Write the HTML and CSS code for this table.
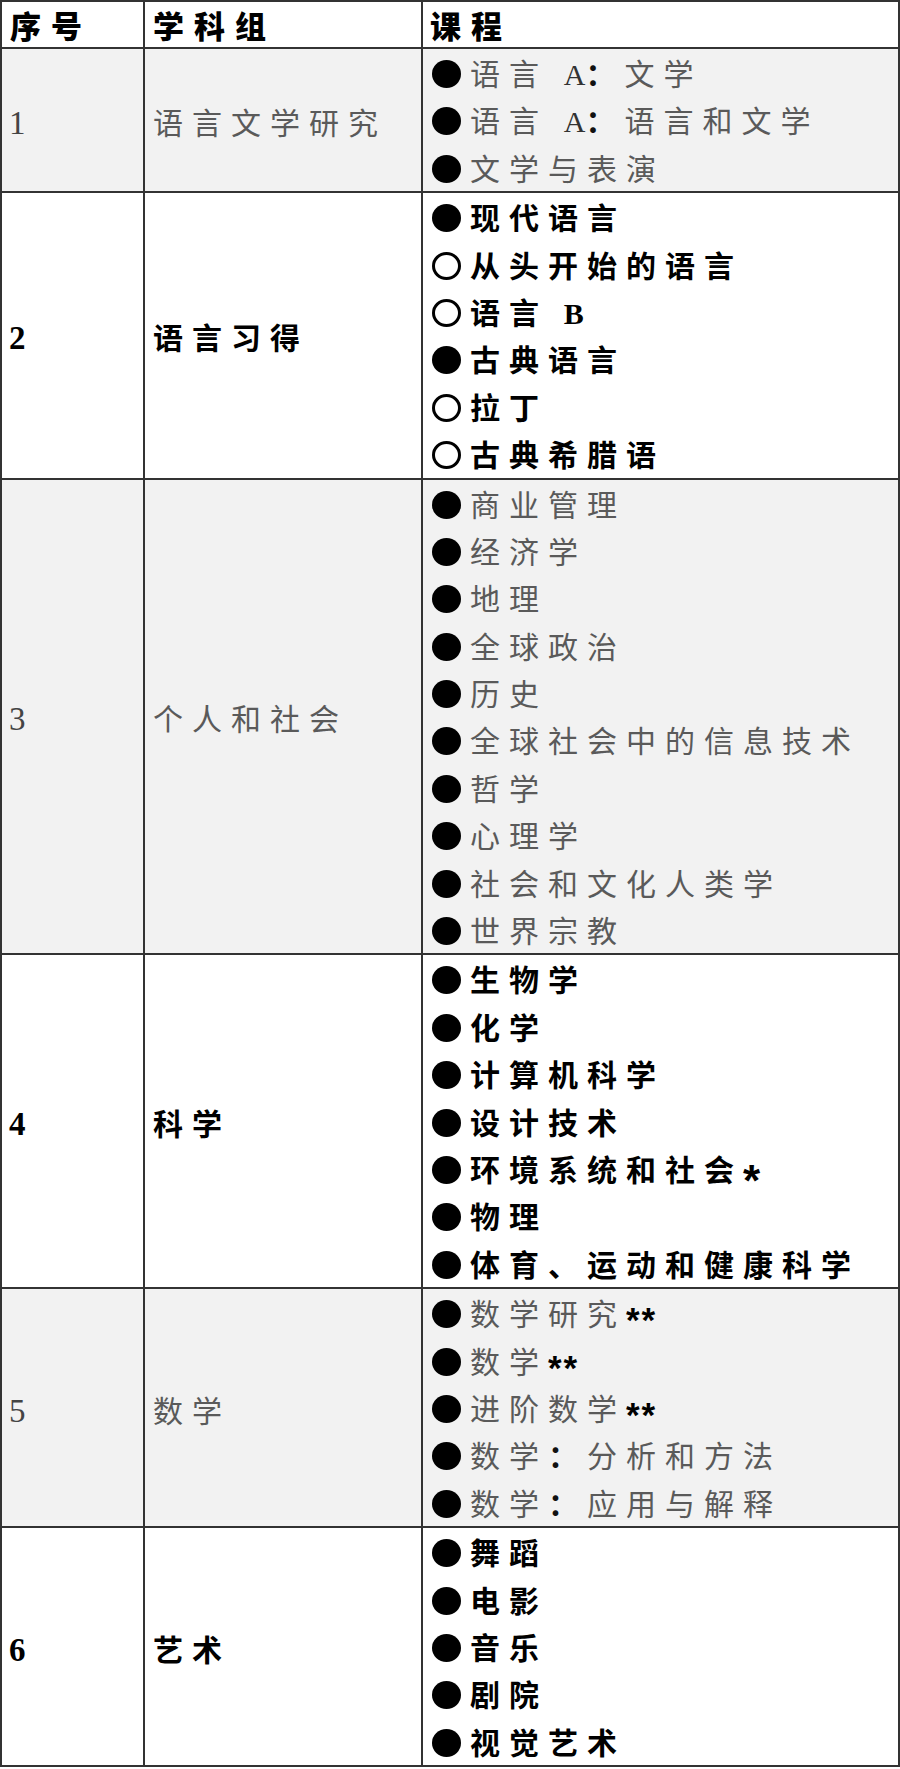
FILE: index.html
```html
<!DOCTYPE html>
<html lang="zh-CN">
<head>
<meta charset="utf-8">
<title>学科组与课程</title>
<link rel="stylesheet" href="styles.css">
</head>
<body>
<div class="tbl">
  <div class="cell head c1">序号</div>
  <div class="cell head c2">学科组</div>
  <div class="cell head c3">课程</div>

  <div class="cell num alt">1</div>
  <div class="cell grp alt">语言文学研究</div>
  <div class="cell alt">
    <ul class="list">
      <li><span class="dot"></span><span class="t">语言 <span class="lat">A</span><span class="p">：</span>文学</span></li>
      <li><span class="dot"></span><span class="t">语言 <span class="lat">A</span><span class="p">：</span>语言和文学</span></li>
      <li><span class="dot"></span><span class="t">文学与表演</span></li>
    </ul>
  </div>

  <div class="cell num strong">2</div>
  <div class="cell grp strong">语言习得</div>
  <div class="cell strong">
    <ul class="list">
      <li><span class="dot"></span><span class="t">现代语言</span></li>
      <li><span class="dot ring"></span><span class="t">从头开始的语言</span></li>
      <li><span class="dot ring"></span><span class="t">语言 <span class="lat">B</span></span></li>
      <li><span class="dot"></span><span class="t">古典语言</span></li>
      <li><span class="dot ring"></span><span class="t">拉丁</span></li>
      <li><span class="dot ring"></span><span class="t">古典希腊语</span></li>
    </ul>
  </div>

  <div class="cell num alt">3</div>
  <div class="cell grp alt">个人和社会</div>
  <div class="cell alt">
    <ul class="list">
      <li><span class="dot"></span><span class="t">商业管理</span></li>
      <li><span class="dot"></span><span class="t">经济学</span></li>
      <li><span class="dot"></span><span class="t">地理</span></li>
      <li><span class="dot"></span><span class="t">全球政治</span></li>
      <li><span class="dot"></span><span class="t">历史</span></li>
      <li><span class="dot"></span><span class="t">全球社会中的信息技术</span></li>
      <li><span class="dot"></span><span class="t">哲学</span></li>
      <li><span class="dot"></span><span class="t">心理学</span></li>
      <li><span class="dot"></span><span class="t">社会和文化人类学</span></li>
      <li><span class="dot"></span><span class="t">世界宗教</span></li>
    </ul>
  </div>

  <div class="cell num strong">4</div>
  <div class="cell grp strong">科学</div>
  <div class="cell strong">
    <ul class="list">
      <li><span class="dot"></span><span class="t">生物学</span></li>
      <li><span class="dot"></span><span class="t">化学</span></li>
      <li><span class="dot"></span><span class="t">计算机科学</span></li>
      <li><span class="dot"></span><span class="t">设计技术</span></li>
      <li><span class="dot"></span><span class="t">环境系统和社会<span class="ast big">*</span></span></li>
      <li><span class="dot"></span><span class="t">物理</span></li>
      <li><span class="dot"></span><span class="t">体育、运动和健康科学</span></li>
    </ul>
  </div>

  <div class="cell num alt">5</div>
  <div class="cell grp alt">数学</div>
  <div class="cell alt">
    <ul class="list">
      <li><span class="dot"></span><span class="t">数学研究<span class="ast">**</span></span></li>
      <li><span class="dot"></span><span class="t">数学<span class="ast">**</span></span></li>
      <li><span class="dot"></span><span class="t">进阶数学<span class="ast">**</span></span></li>
      <li><span class="dot"></span><span class="t">数学<span class="p">：</span>分析和方法</span></li>
      <li><span class="dot"></span><span class="t">数学<span class="p">：</span>应用与解释</span></li>
    </ul>
  </div>

  <div class="cell num strong">6</div>
  <div class="cell grp strong">艺术</div>
  <div class="cell strong">
    <ul class="list">
      <li><span class="dot"></span><span class="t">舞蹈</span></li>
      <li><span class="dot"></span><span class="t">电影</span></li>
      <li><span class="dot"></span><span class="t">音乐</span></li>
      <li><span class="dot"></span><span class="t">剧院</span></li>
      <li><span class="dot"></span><span class="t">视觉艺术</span></li>
    </ul>
  </div>
</div>
</body>
</html>
```

FILE: styles.css
```css
html, body {
  margin: 0;
  padding: 0;
  background: #ffffff;
}

.tbl {
  display: grid;
  grid-template-columns: 141px 276px 1fr;
  gap: 2px;
  padding: 2px;
  width: 900px;
  box-sizing: border-box;
  background: #333333;
  font-family: "Noto Sans CJK SC", sans-serif;
  font-size: 30px;
}

.cell {
  background: #ffffff;
  color: #000000;
}

.alt {
  background: #f2f2f2;
  color: #5a5a5a;
  font-weight: 400;
}

.strong {
  background: #ffffff;
  color: #000000;
  font-weight: 700;
}

/* header */
.head {
  height: 45px;
  line-height: 45px;
  font-size: 31px;
  font-weight: 900;
  letter-spacing: 10px;
  color: #000000;
  white-space: nowrap;
  overflow: hidden;
}

.head.c1 { padding-left: 8px; }
.head.c2 { padding-left: 8px; }
.head.c3 { padding-left: 7px; }

/* number column */
.num {
  display: flex;
  align-items: center;
  padding-left: 7px;
  padding-top: 7px;
  box-sizing: border-box;
  font-family: "Liberation Serif", serif;
  font-size: 33px;
  line-height: 47px;
}

.num.alt { color: #444444; }

/* group column */
.grp {
  display: flex;
  align-items: center;
  padding-left: 8px;
  padding-top: 3px;
  box-sizing: border-box;
  line-height: 47px;
  letter-spacing: 9px;
  white-space: nowrap;
}

/* course list */
.list {
  list-style: none;
  margin: 0;
  padding: 0 0 0 9px;
}

.list li {
  height: 47.4px;
  line-height: 47.4px;
  white-space: nowrap;
}

.dot {
  display: inline-block;
  width: 29px;
  height: 28px;
  margin-right: 9px;
  border-radius: 50%;
  background: #000000;
  vertical-align: -3px;
  box-sizing: border-box;
}

.dot.ring {
  background: transparent;
  border: 3px solid #000000;
}

.t {
  letter-spacing: 9px;
}

.lat {
  font-family: "Liberation Serif", serif;
  letter-spacing: 0;
  color: #333333;
}

.strong .lat {
  color: #000000;
  font-weight: 700;
}

.p {
  color: #111111;
  font-weight: 700;
}

.ast {
  font-family: "Liberation Sans", sans-serif;
  font-weight: 700;
  color: #000000;
  letter-spacing: 2px;
  font-size: 35px;
  line-height: 0.4;
  vertical-align: -7px;
}

.ast.big {
  font-size: 44px;
  letter-spacing: 0;
  vertical-align: -15px;
}
```
